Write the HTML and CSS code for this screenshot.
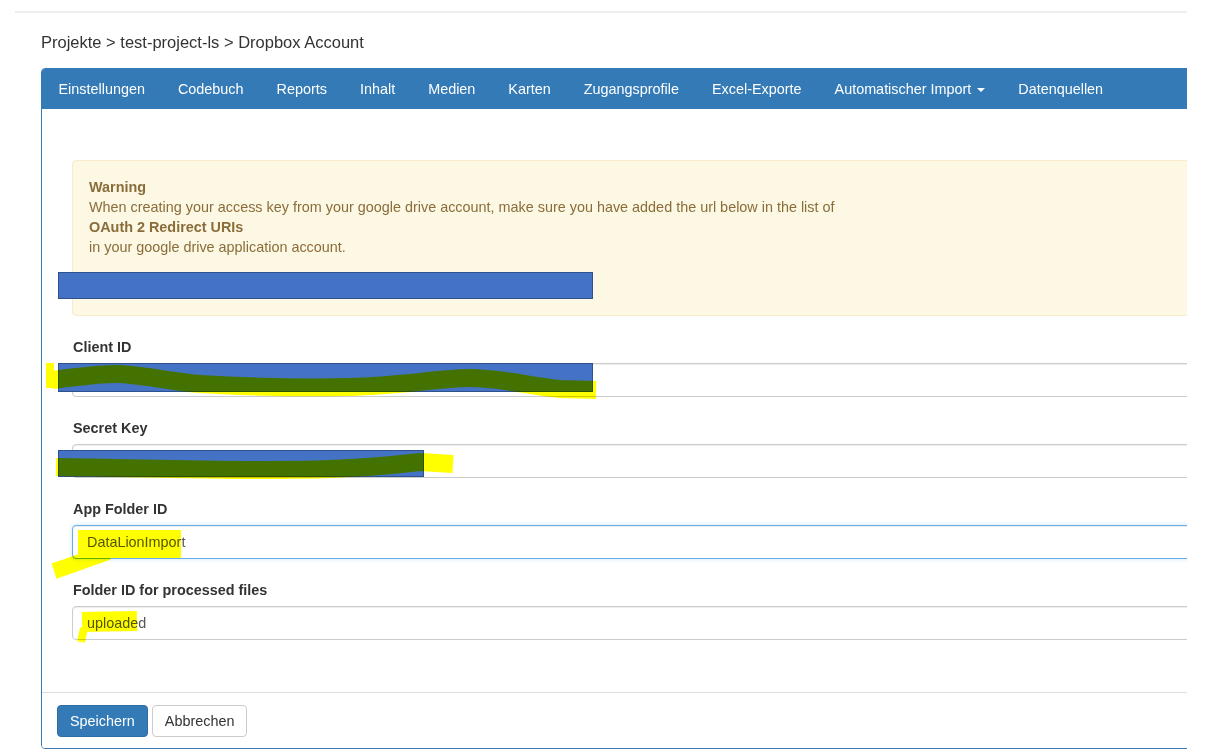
FILE: index.html
```html
<!DOCTYPE html>
<html lang="de">
<head>
<meta charset="utf-8">
<title>Dropbox Account</title>
<link rel="stylesheet" href="styles.css">
</head>
<body>
<div class="viewport">
  <div class="topline"></div>
  <div class="breadcrumb">Projekte &gt; test-project-ls &gt; Dropbox Account</div>

  <div class="panel">
    <ul class="nav">
      <li><a>Einstellungen</a></li>
      <li><a>Codebuch</a></li>
      <li><a>Reports</a></li>
      <li><a>Inhalt</a></li>
      <li><a>Medien</a></li>
      <li><a>Karten</a></li>
      <li><a>Zugangsprofile</a></li>
      <li><a>Excel-Exporte</a></li>
      <li><a>Automatischer Import <span class="caret"></span></a></li>
      <li><a>Datenquellen</a></li>
    </ul>

    <div class="panel-body">
      <div class="alert">
        <strong>Warning</strong><br>
        When creating your access key from your google drive account, make sure you have added the url below in the list of<br>
        <strong>OAuth 2 Redirect URIs</strong><br>
        in your google drive application account.
        <div class="redirect-url"></div>
      </div>

      <div class="form-group">
        <label>Client ID</label>
        <input class="form-control" type="text" value="">
      </div>
      <div class="form-group">
        <label>Secret Key</label>
        <input class="form-control" type="text" value="">
      </div>
      <div class="form-group">
        <label>App Folder ID</label>
        <input class="form-control focused" type="text" value="DataLionImport">
      </div>
      <div class="form-group">
        <label>Folder ID for processed files</label>
        <input class="form-control" type="text" value="uploaded">
      </div>
    </div>

    <div class="panel-footer">
      <button class="btn btn-primary">Speichern</button>
      <button class="btn btn-default">Abbrechen</button>
    </div>
  </div>

  <svg class="masks" width="1211" height="754" viewBox="0 0 1211 754">
    <rect x="58.5" y="272.5" width="534" height="26" fill="#4472c4" stroke="#2f528f" stroke-width="1"/>
    <rect x="58.5" y="363.5" width="534" height="28" fill="#4472c4" stroke="#2f528f" stroke-width="1"/>
    <rect x="58.5" y="450.5" width="365" height="26" fill="#4472c4" stroke="#2f528f" stroke-width="1"/>
  </svg>

  <svg class="markers" width="1211" height="754" viewBox="0 0 1211 754" fill="none" stroke="#ffff00">
    <path d="M50,363 L50,388" stroke-width="8"/>
    <path d="M52,380 C80,377 100,373 120,374 C150,376 175,382 200,384 C250,387 300,388 350,387 C400,386 440,378 470,378 C500,378 530,386 560,389 L596,390" stroke-width="18"/>
    <path d="M56,467 C150,468 250,472 330,469 C380,467 400,464 420,462 L453,464" stroke-width="18"/>
    <path d="M78,544 L181,544" stroke-width="28"/>
    <path d="M54,571 C70,566 88,559 108,552" stroke-width="16"/>
    <path d="M82,622 L137,621" stroke-width="20"/>
    <path d="M84,628 L81,642" stroke-width="8"/>
  </svg>
</div>
</body>
</html>
```

FILE: styles.css
```css
* {
  box-sizing: border-box;
}

html, body {
  margin: 0;
  padding: 0;
  background: #ffffff;
}

body {
  font-family: "Liberation Sans", Arial, sans-serif;
  font-size: 14.4px;
  line-height: 20px;
  color: #333333;
}

.viewport {
  position: relative;
  width: 1187px;
  height: 754px;
  overflow: hidden;
}

.topline {
  margin: 11px 0 0 15px;
  height: 2px;
  background: #eeeeee;
}

.breadcrumb {
  margin-top: 18px;
  padding-left: 41px;
  font-size: 16.5px;
  line-height: 22px;
  color: #333333;
}

.panel {
  margin: 15px 0 0 41px;
  width: 1200px;
  border: 1px solid #337ab7;
  border-radius: 4px;
  background: #ffffff;
}

.nav {
  display: flex;
  margin: 0;
  padding: 0;
  list-style: none;
  height: 40px;
  background: #337ab7;
  border-radius: 3px 3px 0 0;
}

.nav li a {
  display: block;
  padding: 0 16.5px;
  line-height: 40px;
  color: #ffffff;
  white-space: nowrap;
}

.caret {
  display: inline-block;
  width: 0;
  height: 0;
  margin-left: 2px;
  vertical-align: middle;
  border-top: 4px solid #ffffff;
  border-left: 4px solid transparent;
  border-right: 4px solid transparent;
}

.panel-body {
  padding: 51px 0 31px 30px;
}

.alert {
  padding: 16px 16px 14px;
  margin-bottom: 21px;
  background: #fcf8e3;
  border: 1px solid #faebcc;
  border-radius: 4px;
  color: #8a6d3b;
}

.alert strong {
  font-weight: bold;
}

.redirect-url {
  height: 44px;
}

.form-group {
  margin-bottom: 21px;
}

.form-group label {
  display: block;
  padding-left: 1px;
  font-weight: bold;
  margin-bottom: 6px;
  color: #333333;
}

.form-control {
  display: block;
  width: 100%;
  height: 34px;
  padding: 6px 12px 6px 14px;
  font-family: "Liberation Sans", Arial, sans-serif;
  font-size: 14.4px;
  color: #555555;
  background: #ffffff;
  border: 1px solid #cccccc;
  border-radius: 4px;
  box-shadow: inset 0 1px 1px rgba(0, 0, 0, 0.075);
  outline: none;
}

.form-control.focused {
  border-color: #66afe9;
  box-shadow: inset 0 1px 1px rgba(0, 0, 0, 0.075), 0 0 4px rgba(102, 175, 233, 0.35);
}

.panel-footer {
  display: flex;
  gap: 4px;
  padding: 12px 15px 11px;
  border-top: 1px solid #dddddd;
  background: #ffffff;
  border-radius: 0 0 3px 3px;
}

.btn {
  display: inline-block;
  padding: 6px 12px;
  font-family: "Liberation Sans", Arial, sans-serif;
  font-size: 14.4px;
  line-height: 18px;
  border: 1px solid transparent;
  border-radius: 4px;
  cursor: pointer;
}

.btn-primary {
  color: #ffffff;
  background: #337ab7;
  border-color: #2e6da4;
}

.btn-default {
  color: #333333;
  background: #ffffff;
  border-color: #cccccc;
}

.masks,
.markers {
  position: absolute;
  top: 0;
  left: 0;
  pointer-events: none;
}

.markers {
  mix-blend-mode: multiply;
}

.markers path {
  stroke-linecap: butt;
  stroke-linejoin: round;
}
```
